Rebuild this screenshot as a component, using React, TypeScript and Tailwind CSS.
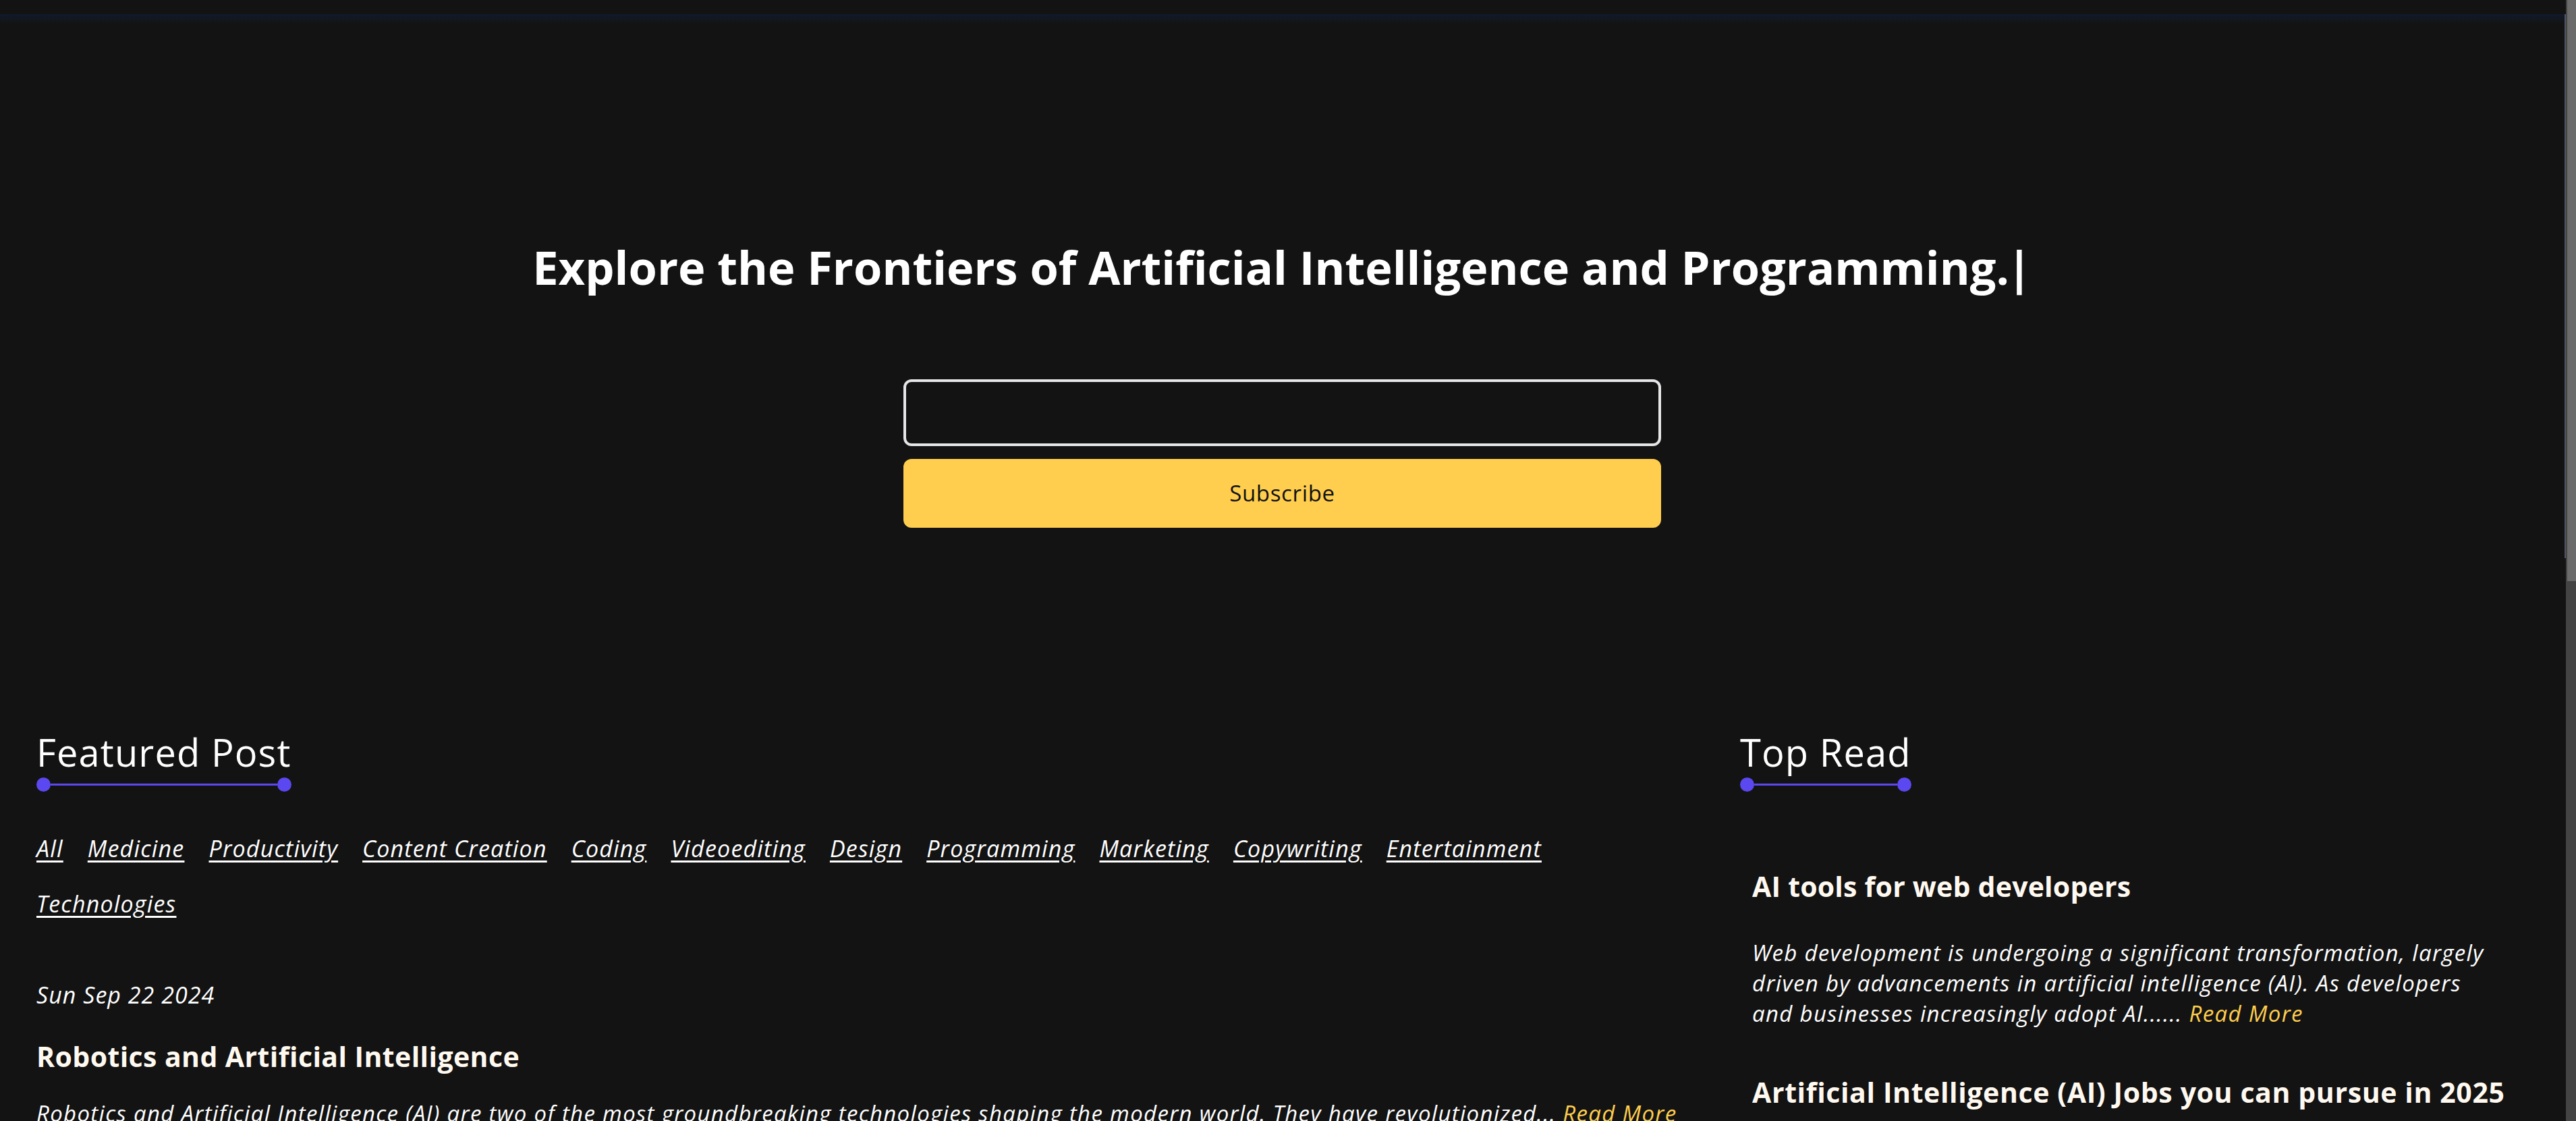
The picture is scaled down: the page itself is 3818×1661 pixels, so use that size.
import React from "react";

const categories = [
  "All",
  "Medicine",
  "Productivity",
  "Content Creation",
  "Coding",
  "Videoediting",
  "Design",
  "Programming",
  "Marketing",
  "Copywriting",
  "Entertainment",
  "Technologies",
];

function SectionTitle({ title }: { title: string }) {
  return (
    <div className="inline-flex flex-col items-stretch">
      <h2 className="text-[56px] leading-[64px] font-normal text-white tracking-[0.02em]">{title}</h2>
      <div className="mt-[6px] flex h-[21px] items-center">
        <span className="h-[21px] w-[21px] shrink-0 rounded-full bg-[#5b48f0]" />
        <span className="h-[3px] flex-1 bg-[#5b48f0]" />
        <span className="h-[21px] w-[21px] shrink-0 rounded-full bg-[#5b48f0]" />
      </div>
    </div>
  );
}

export default function App() {
  return (
    <div className="flex h-[1661px] w-full overflow-hidden bg-[#131313] font-['Open_Sans',_'Liberation_Sans',_sans-serif] text-white">
      <main className="flex min-w-0 flex-1">
        <div className="flex min-w-0 flex-1 flex-col">
          <div className="h-[21px] shrink-0" />
          <div className="h-[14px] shrink-0 bg-gradient-to-b from-[#111a2c] to-[#131313]" />

          {/* Hero */}
          <section className="flex flex-col items-center pt-[319px]">
            <h1 className="text-[68.5px] leading-[84px] font-bold text-white">
              Explore the Frontiers of Artificial Intelligence and Programming.
              <span className="-ml-[4px]">|</span>
            </h1>
            <form className="mt-[124px] flex w-[1123px] flex-col gap-[19px]">
              <input
                type="email"
                className="h-[99px] w-full rounded-[12px] border-[4px] border-[#e6e6e8] bg-transparent px-6 text-[32px] text-white outline-none"
              />
              <button
                type="button"
                className="h-[102px] w-full rounded-[12px] bg-[#ffce4f] text-[33px] tracking-[0.02em] font-normal text-[#111111]"
              >
                Subscribe
              </button>
            </form>
          </section>

          {/* Content */}
          <section className="mt-[300px] flex gap-[89px] px-[54px]">
            {/* Left column */}
            <div className="w-[2436px] shrink-0">
              <SectionTitle title="Featured Post" />
              <nav className="mt-[43px] flex flex-wrap gap-x-[36px]">
                {categories.map((c) => (
                  <a
                    key={c}
                    href="#"
                    className="text-[34px] leading-[82px] tracking-[0.035em] italic font-normal text-white underline decoration-[3px] underline-offset-[5px]"
                  >
                    {c}
                  </a>
                ))}
              </nav>
              <div className="mt-[70px] text-[34px] leading-[48px] tracking-[0.03em] italic font-medium text-white">
                Sun Sep 22 2024
              </div>
              <h3 className="mt-[37px] text-[41px] leading-[60px] tracking-[0.01em] font-bold text-[#fff9f0]">
                Robotics and Artificial Intelligence
              </h3>
              <p className="mt-[32px] whitespace-nowrap text-[33px] leading-[45px] tracking-[0.04em] italic font-normal text-white">
                Robotics and Artificial Intelligence (AI) are two of the most groundbreaking technologies shaping the modern world. They have revolutionized...{" "}
                <a href="#" className="text-[#ffce4f]">Read More</a>
              </p>
            </div>

            {/* Right column */}
            <div className="min-w-0 flex-1">
              <SectionTitle title="Top Read" />
              <div className="mt-[110px] pl-[18px]">
                <h3 className="text-[41px] leading-[60px] tracking-[0.005em] font-bold text-[#fff9f0]">
                  AI tools for web developers
                </h3>
                <p className="mt-[46px] whitespace-nowrap text-[33px] leading-[45px] tracking-[0.04em] italic font-normal text-white">
                  Web development is undergoing a significant transformation, largely
                  <br />
                  driven by advancements in artificial intelligence (AI). As developers
                  <br />
                  and businesses increasingly adopt AI......{" "}
                  <a href="#" className="text-[#ffce4f]">Read More</a>
                </p>
                <h3 className="mt-[64px] whitespace-nowrap text-[41px] leading-[60px] tracking-[0.015em] font-bold text-[#fff9f0]">
                  Artificial Intelligence (AI) Jobs you can pursue in 2025
                </h3>
              </div>
            </div>
          </section>
        </div>
        {/* thin inner edge line */}
        <div className="flex w-[2px] shrink-0 flex-col">
          <div className="h-[21px] shrink-0" />
          <div className="h-[806px] shrink-0 bg-[#4e5663]" />
        </div>
      </main>

      {/* Scrollbar */}
      <div className="flex w-[15px] shrink-0 flex-col bg-[#444444]">
        <div className="ml-[2px] h-[861px] bg-[#6b6b6b]" />
      </div>
    </div>
  );
}
